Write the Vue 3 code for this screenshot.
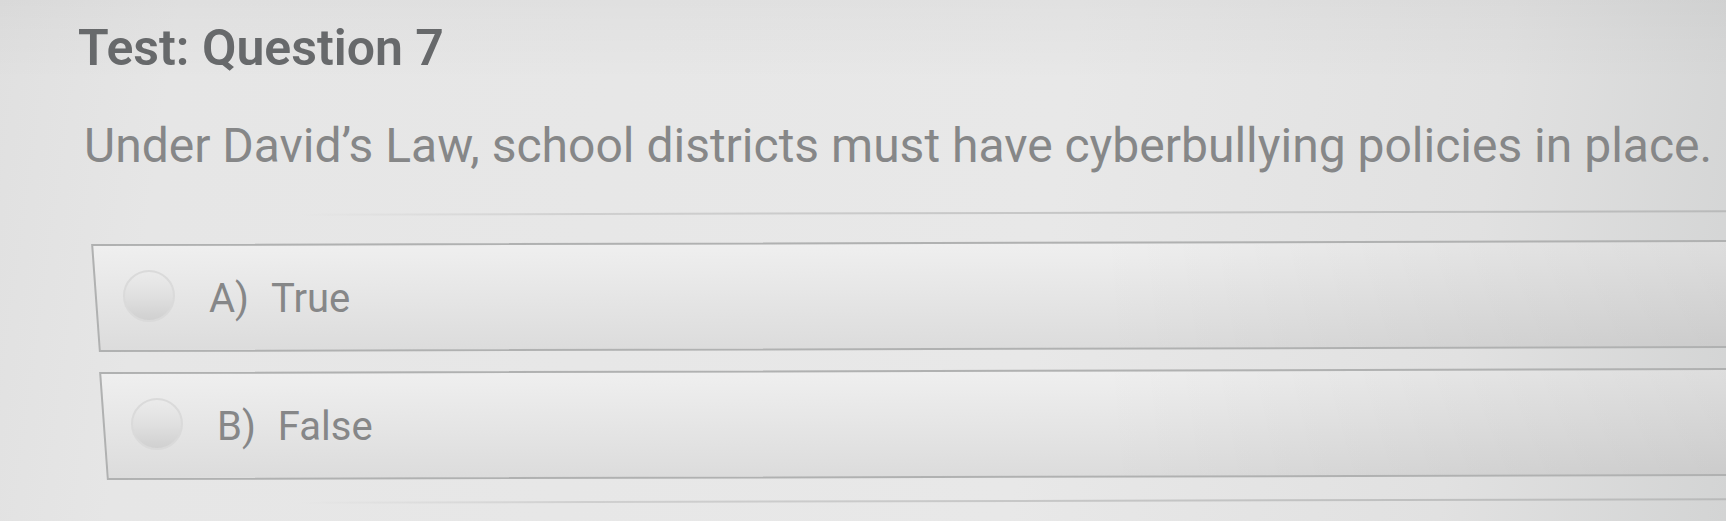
<script setup>
    import { ref } from 'vue'

    const title = 'Test: Question 7'
    const question = 'Under David’s Law, school districts must have cyberbullying policies in place.'
    const answer = ref('')
    const options = [
        { id: 'a', letter: 'A)', text: 'True' },
        { id: 'b', letter: 'B)', text: 'False' }
    ]
</script>

<template>
    <main class="page">
        <h1 class="title">{{ title }}</h1>
        <form @submit.prevent>
            <p id="question" class="question">{{ question }}</p>
            <div class="rule"></div>
            <div class="options" role="radiogroup" aria-labelledby="question">
                <label v-for="option in options" :key="option.id" :for="option.id" :class="['option', option.id]">
                    <input :id="option.id" v-model="answer" type="radio" name="answer" :value="option.id" class="radio">
                    <span class="letter">{{ option.letter }}</span>
                    <span class="text">{{ option.text }}</span>
                </label>
            </div>
            <div class="rule"></div>
        </form>
    </main>
</template>

<style>
    body {
        margin: 0;
        overflow: hidden;
        background: #e5e5e5;
    }
</style>

<style scoped>
    .page {
        box-sizing: border-box;
        min-height: 100vh;
        padding: 20px 0 18px;
        overflow: hidden;
        font-family: Roboto, "Liberation Sans", sans-serif;
        color: #868788;
        background:
            linear-gradient(180deg, rgba(0, 0, 0, 0.03), transparent 80px),
            linear-gradient(98deg, #e0e0e0 0%, #e6e6e6 10%, #e8e8e8 60%, #e1e1e1 84%, #d3d4d4 100%);
    }
    .title {
        margin: 0 0 0 78px;
        font-size: 50px;
        line-height: 56px;
        font-weight: 600;
        color: #67696b;
    }
    .question {
        margin: 40px 0 36px 84px;
        font-size: 48px;
        line-height: 60px;
        white-space: nowrap;
    }
    .rule {
        height: 2px;
        margin-left: 300px;
        background: linear-gradient(90deg, transparent, #cfcfcf 20%, #b9baba);
        transform: rotate(-0.14deg);
    }
    .options {
        display: flex;
        flex-direction: column;
        gap: 20px;
        margin: 28px 0 22px;
    }
    .option {
        position: relative;
        display: flex;
        align-items: center;
        box-sizing: border-box;
        height: 108px;
        margin-left: 95px;
        padding-left: 28px;
        font-size: 40px;
        line-height: 48px;
        cursor: pointer;
    }
    .option.b {
        margin-left: 103px;
    }
    /* slanted frame, runs off the right edge */
    .option::before {
        content: "";
        position: absolute;
        inset: 0 -40px 0 0;
        box-sizing: border-box;
        border: 2px solid #b0b1b1;
        background:
            linear-gradient(90deg, transparent 60%, rgba(0, 0, 0, 0.08)),
            linear-gradient(180deg, #efefef, #dcdcdc);
        transform: rotate(-0.14deg) skewX(4deg);
    }
    .radio {
        position: relative;
        appearance: none;
        width: 52px;
        height: 52px;
        margin: 0 34px 0 0;
        border: 2px solid #dadada;
        border-radius: 50%;
        background: linear-gradient(180deg, #ebebeb, #e0e0e0 50%, #d0d0d0);
        cursor: pointer;
    }
    .radio:checked {
        background: radial-gradient(circle, #777 35%, #e2e2e2 38%);
    }
    .letter,
    .text {
        position: relative;
        padding-top: 6px;
    }
    .letter {
        margin-right: 22px;
    }
</style>
